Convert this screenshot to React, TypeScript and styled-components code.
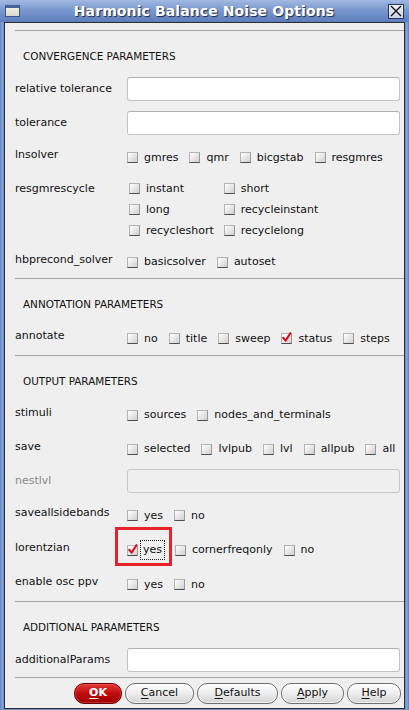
import React from "react";
import styled, { createGlobalStyle } from "styled-components";

const GlobalStyle = createGlobalStyle`
  html, body {
    margin: 0;
    padding: 0;
    background: #efefef;
  }
  body {
    font-family: "DejaVu Sans", "Liberation Sans", sans-serif;
    font-size: 11px;
    color: #111;
  }
`;

const Window = styled.div`
  width: 409px;
  height: 710px;
  box-sizing: border-box;
  padding: 0 4px 1px 4px;
  display: flex;
  flex-direction: column;
  background: linear-gradient(90deg, #5f80bf 0px, #8aa6d8 2px, #6d8dc8 4px, #6d8dc8 405px, #8aa6d8 407px, #5f80bf 409px);
`;

const TitleBar = styled.div`
  height: 22px;
  margin: 0 -4px;
  display: flex;
  align-items: center;
  justify-content: space-between;
  padding: 0 5px 0 5px;
  background: linear-gradient(#a1b9e2, #7b98cf 45%, #5d7ebe);
`;

const Title = styled.div`
  flex: 1;
  text-align: center;
  font-weight: bold;
  font-size: 14px;
  color: #fff;
  text-shadow: 1px 1px 1px #1d2a4a;
  letter-spacing: 0.1px;
`;

const WinIcon = styled.div`
  width: 15px;
  height: 12px;
  box-sizing: border-box;
  border: 1px solid #3d5585;
  border-top: 3px solid #47639a;
  background: linear-gradient(#f0efe4, #d8d7c8);
`;

const CloseBox = styled.div`
  width: 16px;
  height: 15px;
  box-sizing: border-box;
  border: 1px solid #2a3550;
  background: linear-gradient(#eef1f7, #c9d2e4);
  display: flex;
  align-items: center;
  justify-content: center;
`;

const Frame = styled.div`
  flex: 1;
  border: 1px solid #2c2c2c;
  background: #efefef;
  padding: 7px 0 0 10px;
  display: flex;
  flex-direction: column;
`;

const Separator = styled.div`
  height: 1px;
  background: #a4a4a4;
`;

const SectionHeader = styled.div`
  height: 41px;
  box-sizing: border-box;
  padding: 18px 0 0 8px;
  line-height: 14px;
  font-size: 10.4px;
`;

const Row = styled.div<{ $h: number; $top?: boolean }>`
  height: ${(p) => p.$h}px;
  box-sizing: border-box;
  display: flex;
  align-items: ${(p) => (p.$top ? "flex-start" : "center")};
  padding: ${(p) => (p.$top ? "4px 4px 0 0" : "0 4px 0 0")};
`;

const Label = styled.div<{ $disabled?: boolean; $check?: boolean; $tall?: boolean }>`
  width: 112px;
  flex-shrink: 0;
  line-height: ${(p) => (p.$tall ? "21px" : "14px")};
  padding-bottom: ${(p) => (p.$check ? "3px" : "0")};
  color: ${(p) => (p.$disabled ? "#8a8a8a" : "#111")};
`;

const Field = styled.input`
  flex: 1;
  height: 24px;
  box-sizing: border-box;
  border: 1px solid #c2c2c2;
  border-top-color: #b0b0b0;
  border-radius: 3px;
  background: #fff;
  outline: none;
  font: inherit;
  padding: 0 4px;

  &:disabled {
    background: #efefef;
    border-color: #c6c6c6;
  }
`;

const Options = styled.div`
  display: flex;
  align-items: center;
  gap: 11px;
  padding-top: 2px;
`;

const OptionGrid = styled.div`
  display: grid;
  grid-template-columns: auto auto;
  grid-auto-rows: 21px;
  column-gap: 10px;
  padding-left: 2px;
  align-items: center;
`;

const CheckItem = styled.label`
  position: relative;
  display: flex;
  align-items: center;
  gap: 6px;
  white-space: nowrap;
  line-height: 14px;
`;

const Box = styled.span`
  width: 11px;
  height: 11px;
  box-sizing: border-box;
  border: 1px solid #b4b4b4;
  border-right-color: #9a9a9a;
  border-bottom-color: #4e4e4e;
  background: linear-gradient(135deg, #ffffff, #d0d0d0);
  position: relative;
  flex-shrink: 0;
`;

const CheckMark = styled.svg`
  position: absolute;
  left: -1px;
  top: -3px;
`;

const Focus = styled.span`
  outline: 1px dotted #222;
  outline-offset: 0;
  padding: 2px 2px;
  margin-left: -3px;
`;

const Highlight = styled.div`
  position: absolute;
  left: -12px;
  top: -14px;
  width: 57px;
  height: 39px;
  box-sizing: border-box;
  border: 3px solid #e8212b;
  pointer-events: none;
`;

const ButtonBar = styled.div`
  flex: 1;
  display: flex;
  align-items: center;
  justify-content: flex-end;
  gap: 3px;
  padding-right: 3px;
`;

const Button = styled.button<{ $w: number; $primary?: boolean }>`
  width: ${(p) => p.$w}px;
  height: 21px;
  padding: 0;
  border-radius: 10px;
  font-family: inherit;
  font-size: 11px;
  line-height: 14px;
  border: 1px solid ${(p) => (p.$primary ? "#6a0000" : "#6e6e6e")};
  color: ${(p) => (p.$primary ? "#fff" : "#111")};
  font-weight: ${(p) => (p.$primary ? "bold" : "normal")};
  background: ${(p) =>
    p.$primary
      ? "linear-gradient(#e33a3a, #c10c0c 50%, #9c0000)"
      : "linear-gradient(#ffffff, #ededed 50%, #d2d2d2)"};
  box-shadow: inset 0 0 0 1px ${(p) => (p.$primary ? "rgba(255,120,120,0.35)" : "rgba(255,255,255,0.7)")};

  u {
    text-decoration: underline;
    text-underline-offset: 2px;
  }
`;

function Check({
  label,
  checked,
  focused,
  highlight,
}: {
  label: string;
  checked?: boolean;
  focused?: boolean;
  highlight?: boolean;
}) {
  return (
    <CheckItem>
      <Box>
        {checked && (
          <CheckMark width="11" height="12" viewBox="0 0 11 12">
            <path d="M2.2 6.8 L4.6 9.6 L9.4 2.2" fill="none" stroke="#d8101c" strokeWidth="2.1" strokeLinecap="round" strokeLinejoin="round" />
          </CheckMark>
        )}
      </Box>
      {focused ? <Focus>{label}</Focus> : <span>{label}</span>}
      {highlight && <Highlight />}
    </CheckItem>
  );
}

function CheckRow({ label, h, items }: { label: string; h: number; items: React.ReactNode }) {
  return (
    <Row $h={h}>
      <Label $check>{label}</Label>
      <Options>{items}</Options>
    </Row>
  );
}

export default function App() {
  return (
    <>
      <GlobalStyle />
      <Window>
        <TitleBar>
          <WinIcon />
          <Title>Harmonic Balance Noise Options</Title>
          <CloseBox>
            <svg width="12" height="12" viewBox="0 0 12 12">
              <path d="M1 1 L11 11 M11 1 L1 11" stroke="#111" strokeWidth="1.4" />
            </svg>
          </CloseBox>
        </TitleBar>
        <Frame>
          <Separator />
          <SectionHeader>CONVERGENCE PARAMETERS</SectionHeader>
          <Row $h={34}>
            <Label>relative tolerance</Label>
            <Field />
          </Row>
          <Row $h={33}>
            <Label>tolerance</Label>
            <Field />
          </Row>
          <CheckRow
            label="lnsolver"
            h={35}
            items={
              <>
                <Check label="gmres" />
                <Check label="qmr" />
                <Check label="bicgstab" />
                <Check label="resgmres" />
              </>
            }
          />
          <Row $h={70} $top>
            <Label $tall>resgmrescycle</Label>
            <OptionGrid>
              <Check label="instant" />
              <Check label="short" />
              <Check label="long" />
              <Check label="recycleinstant" />
              <Check label="recycleshort" />
              <Check label="recyclelong" />
            </OptionGrid>
          </Row>
          <CheckRow
            label="hbprecond_solver"
            h={34}
            items={
              <>
                <Check label="basicsolver" />
                <Check label="autoset" />
              </>
            }
          />
          <Separator />
          <SectionHeader>ANNOTATION PARAMETERS</SectionHeader>
          <CheckRow
            label="annotate"
            h={35}
            items={
              <>
                <Check label="no" />
                <Check label="title" />
                <Check label="sweep" />
                <Check label="status" checked />
                <Check label="steps" />
              </>
            }
          />
          <Separator />
          <SectionHeader>OUTPUT PARAMETERS</SectionHeader>
          <CheckRow
            label="stimuli"
            h={34}
            items={
              <>
                <Check label="sources" />
                <Check label="nodes_and_terminals" />
              </>
            }
          />
          <CheckRow
            label="save"
            h={34}
            items={
              <>
                <Check label="selected" />
                <Check label="lvlpub" />
                <Check label="lvl" />
                <Check label="allpub" />
                <Check label="all" />
              </>
            }
          />
          <Row $h={32}>
            <Label $disabled>nestlvl</Label>
            <Field disabled />
          </Row>
          <CheckRow
            label="saveallsidebands"
            h={35}
            items={
              <>
                <Check label="yes" />
                <Check label="no" />
              </>
            }
          />
          <CheckRow
            label="lorentzian"
            h={34}
            items={
              <>
                <Check label="yes" checked focused highlight />
                <Check label="cornerfreqonly" />
                <Check label="no" />
              </>
            }
          />
          <CheckRow
            label="enable osc ppv"
            h={35}
            items={
              <>
                <Check label="yes" />
                <Check label="no" />
              </>
            }
          />
          <Separator />
          <SectionHeader>ADDITIONAL PARAMETERS</SectionHeader>
          <Row $h={34}>
            <Label>additionalParams</Label>
            <Field />
          </Row>
          <Separator />
          <ButtonBar>
            <Button $w={48} $primary>
              <u>O</u>K
            </Button>
            <Button $w={69}>
              <u>C</u>ancel
            </Button>
            <Button $w={81}>
              <u>D</u>efaults
            </Button>
            <Button $w={63}>
              <u>A</u>pply
            </Button>
            <Button $w={54}>
              <u>H</u>elp
            </Button>
          </ButtonBar>
        </Frame>
      </Window>
    </>
  );
}
